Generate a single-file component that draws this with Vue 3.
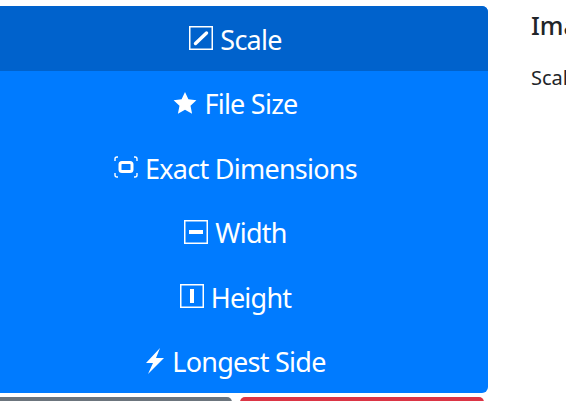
<script setup>
const items = [
  { label: 'Scale', icon: 'scale', active: true },
  { label: 'File Size', icon: 'star' },
  { label: 'Exact Dimensions', icon: 'exact' },
  { label: 'Width', icon: 'width' },
  { label: 'Height', icon: 'height' },
  { label: 'Longest Side', icon: 'bolt' },
]
</script>

<template>
  <div class="page">
    <div class="layout">
      <div class="left">
        <div class="menu">
          <a v-for="item in items" :key="item.label" class="item" :class="{ active: item.active }">
            <svg v-if="item.icon === 'scale'" class="icon" width="24" height="24" viewBox="0 0 24 24">
              <rect x="0.75" y="0.75" width="22.5" height="22.5" fill="none" stroke="#fff" stroke-width="1.5" />
              <path d="M6.5 17.5 L17.5 7" stroke="#fff" stroke-width="3.4" stroke-linecap="round" fill="none" />
            </svg>
            <svg v-else-if="item.icon === 'star'" class="icon" width="24" height="24" viewBox="0 0 24 24">
              <path d="M12 1 L15.4 8.3 L23.4 9.3 L17.5 14.8 L19.1 22.7 L12 18.8 L4.9 22.7 L6.5 14.8 L0.6 9.3 L8.6 8.3 Z" fill="#fff" />
            </svg>
            <svg v-else-if="item.icon === 'exact'" class="icon" width="24" height="24" viewBox="0 0 24 24">
              <path d="M1 6 V4 Q1 2 3 2 H4 M20 2 H21 Q23 2 23 4 V6 M23 18 V20 Q23 22 21 22 H20 M4 22 H3 Q1 22 1 20 V18" fill="none" stroke="#fff" stroke-width="1.4" />
              <rect x="6" y="7.5" width="12" height="9" rx="2" fill="none" stroke="#fff" stroke-width="3" />
            </svg>
            <svg v-else-if="item.icon === 'width'" class="icon" width="24" height="24" viewBox="0 0 24 24">
              <rect x="0.75" y="0.75" width="22.5" height="22.5" fill="none" stroke="#fff" stroke-width="1.5" />
              <rect x="5" y="10" width="14" height="4" fill="#fff" />
            </svg>
            <svg v-else-if="item.icon === 'height'" class="icon" width="24" height="24" viewBox="0 0 24 24">
              <rect x="0.75" y="0.75" width="22.5" height="22.5" fill="none" stroke="#fff" stroke-width="1.5" />
              <rect x="10" y="5" width="4" height="14" fill="#fff" />
            </svg>
            <svg v-else class="icon" width="20" height="26" viewBox="0 0 20 26">
              <path d="M15 0 L1 15 H8 L3 26 L19 10 H11 Z" fill="#fff" />
            </svg>
            <span class="label">{{ item.label }}</span>
          </a>
        </div>
        <div class="actions">
          <div class="btn grey"></div>
          <div class="btn red"></div>
        </div>
      </div>
      <div class="right">
        <h5>Image Scale</h5>
        <p>Scale the image by a percentage</p>
      </div>
    </div>
  </div>
</template>

<style>
html, body { margin: 0; background: #fff; overflow: hidden; }
</style>

<style scoped>
.page {
  width: 566px;
  height: 401px;
  overflow: hidden;
  font-family: "Noto Sans", "Open Sans", sans-serif;
  color: #212529;
}
.layout {
  display: flex;
  width: 700px;
  margin-left: -16px;
  padding-top: 6px;
  box-sizing: border-box;
}
.left { width: 504px; flex: none; }
.menu {
  background: #007bff;
  border-radius: 0 6px 6px 0;
  overflow: hidden;
  height: 387px;
  display: flex;
  flex-direction: column;
}
.item {
  flex: 1;
  display: flex;
  align-items: center;
  justify-content: center;
  gap: 7px;
  color: #fff;
  font-size: 27px;
  letter-spacing: -0.75px;
  padding-right: 1px;
}
.item.active { background: #0062cc; }
.icon { flex: none; }
.label { position: relative; top: 1px; }
.actions {
  display: flex;
  gap: 8px;
  margin-top: 4px;
  width: 500px;
}
.btn { height: 40px; border-radius: 5px; }
.grey { width: 248px; background: #6c757d; }
.red { width: 244px; background: #dc3545; }
.right { padding-left: 43px; white-space: nowrap; }
h5 { margin: 5px 0 0; font-size: 25px; font-weight: 500; line-height: 29px; }
p { margin: 23px 0 0; font-size: 20px; line-height: 30px; }
</style>
